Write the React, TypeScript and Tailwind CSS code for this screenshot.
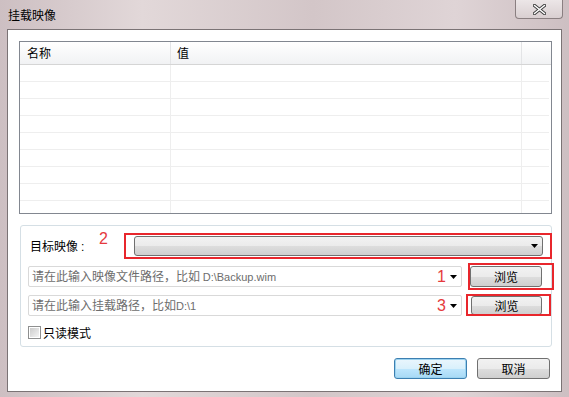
import React from 'react';

const cjk = { fontFamily: '"Noto Sans CJK SC", "Liberation Sans", sans-serif' };
const latin = { fontFamily: '"Liberation Sans", sans-serif' };

const btn =
  'flex items-center justify-center rounded-[3px] border border-[#707070] bg-[linear-gradient(#f2f2f2_0%,#ebebeb_50%,#dddddd_51%,#cfcfcf_100%)] text-[12px] text-black';

const Arrow = () => (
  <svg width="7" height="4" viewBox="0 0 7 4">
    <path d="M0 0h7L3.5 4z" fill="#000" />
  </svg>
);

const PathBox = ({ hint, mark }: { hint: React.ReactNode; mark: string }) => (
  <div className="flex h-[21px] w-[434px] items-center justify-between rounded-[2px] border border-[#d9d9d9] bg-white pl-[3px] pr-[4px]">
    <span className="text-[12px] text-[#6d6d6d] leading-none">{hint}</span>
    <div className="flex items-center gap-[4px]">
      <span className="text-[16px] leading-none text-[#e53a3d]" style={latin}>{mark}</span>
      <Arrow />
    </div>
  </div>
);

export default function App() {
  const rows = Array.from({ length: 9 });
  return (
    <div
      className="flex h-[397px] w-[569px] flex-col bg-[linear-gradient(90deg,#cdbfc2_0%,#e2d8d9_25%,#d3c6c8_55%,#dfd4d6_80%,#cdbfc2_100%)] px-[7px] pb-[5px]"
      style={cjk}
    >
      {/* title bar */}
      <div className="flex h-[29px] items-start justify-between">
        <span className="mt-[9px] pl-[1px] text-[12px] leading-none text-black">挂载映像</span>
        <div className="mr-[-1px] flex h-[19px] w-[48px] items-center justify-center rounded-b-[4px] border border-t-0 border-[#8a7f81] bg-[linear-gradient(#ece6e7,#d9cfd1)]">
          <svg width="13" height="11" viewBox="0 0 13 11">
            <path d="M1.5 1.5l10 8M11.5 1.5l-10 8" stroke="#3c3c3c" strokeWidth="3.4" strokeLinecap="round" />
            <path d="M1.5 1.5l10 8M11.5 1.5l-10 8" stroke="#fff" strokeWidth="1.6" strokeLinecap="round" />
          </svg>
        </div>
      </div>

      {/* client area */}
      <div className="flex flex-1 flex-col border border-[#7b7375] bg-white pl-[11px] pr-[9px] pt-[11px]">
        {/* list view */}
        <div className="h-[173px] w-[533px] overflow-hidden border border-[#828790] bg-white">
          <div className="flex h-[23px] border-b border-[#d5d5d5] bg-[linear-gradient(#ffffff,#f1f2f4)] text-[12px] leading-none">
            <div className="flex w-[151px] items-center border-r border-[#e3e4e6] pl-[7px]">名称</div>
            <div className="flex w-[351px] items-center border-r border-[#e3e4e6] pl-[6px]">值</div>
            <div className="flex-1" />
          </div>
          {rows.map((_, i) => (
            <div key={i} className="flex h-[17px] w-[529px] border-b border-[#eeeeee]">
              <div className="w-[151px] border-r border-[#eeeeee]" />
              <div className="w-[351px] border-r border-[#eeeeee]" />
            </div>
          ))}
        </div>

        {/* group box */}
        <div className="relative ml-[1px] mt-[11px] h-[122px] w-[532px] rounded-[3px] border border-[#d5dfe5] pl-[7px] pt-[10px]">
          <div className="flex h-[20px] items-center">
            <span className="w-[106px] pl-[2px] text-[12px] leading-none text-black">
              目标映像<span className="ml-[3px]" style={latin}>:</span>
            </span>
            <div className="flex h-[20px] w-[409px] items-center justify-end rounded-[3px] border border-[#707070] bg-[linear-gradient(#f2f2f2_0%,#ebebeb_50%,#dddddd_51%,#cfcfcf_100%)] pr-[4px]">
              <Arrow />
            </div>
          </div>
          <div className="mt-[10px] flex items-center gap-[8px]">
            <PathBox hint={<>请在此输入映像文件路径，比如 <span className="text-[11px]" style={latin}>D:\Backup.wim</span></>} mark="1" />
            <button className={`${btn} h-[21px] w-[72px]`}>浏览</button>
          </div>
          <div className="mt-[8px] flex items-center gap-[9px]">
            <PathBox hint={<>请在此输入挂载路径，比如<span className="text-[11px]" style={latin}>D:\1</span></>} mark="3" />
            <button className={`${btn} h-[19px] w-[71px]`}>浏览</button>
          </div>
          <div className="mt-[10px] flex items-center gap-[2px]">
            <div className="flex h-[13px] w-[13px] items-center justify-center border border-[#8e8f8f] bg-white">
              <div className="h-[9px] w-[9px] bg-[linear-gradient(135deg,#cbcbcb,#f4f4f4)]" />
            </div>
            <span className="text-[12px] leading-none text-black">只读模式</span>
          </div>

          {/* red annotations */}
          <span className="absolute left-[78px] top-[5px] text-[16px] leading-none text-[#e53a3d]" style={latin}>2</span>
          <div className="pointer-events-none absolute left-[103px] top-[7px] h-[26px] w-[428px] border-2 border-[#e8262c]" />
          <div className="pointer-events-none absolute left-[447px] top-[37px] h-[27px] w-[86px] border-2 border-[#e8262c]" />
          <div className="pointer-events-none absolute left-[445px] top-[68px] h-[22px] w-[85px] border-2 border-[#e8262c]" />
        </div>

        {/* dialog buttons */}
        <div className="mt-[11px] flex justify-end gap-[10px] pr-[2px]">
          <button className="flex h-[21px] w-[73px] items-center justify-center rounded-[3px] border border-[#3c7fb1] bg-[linear-gradient(#eaf6fd_0%,#d9f0fc_50%,#bee6fd_51%,#a7d9f5_100%)] text-[12px] text-black shadow-[inset_0_0_0_1px_#9cd3f0]">
            确定
          </button>
          <button className={`${btn} h-[21px] w-[73px]`}>取消</button>
        </div>
      </div>
    </div>
  );
}
